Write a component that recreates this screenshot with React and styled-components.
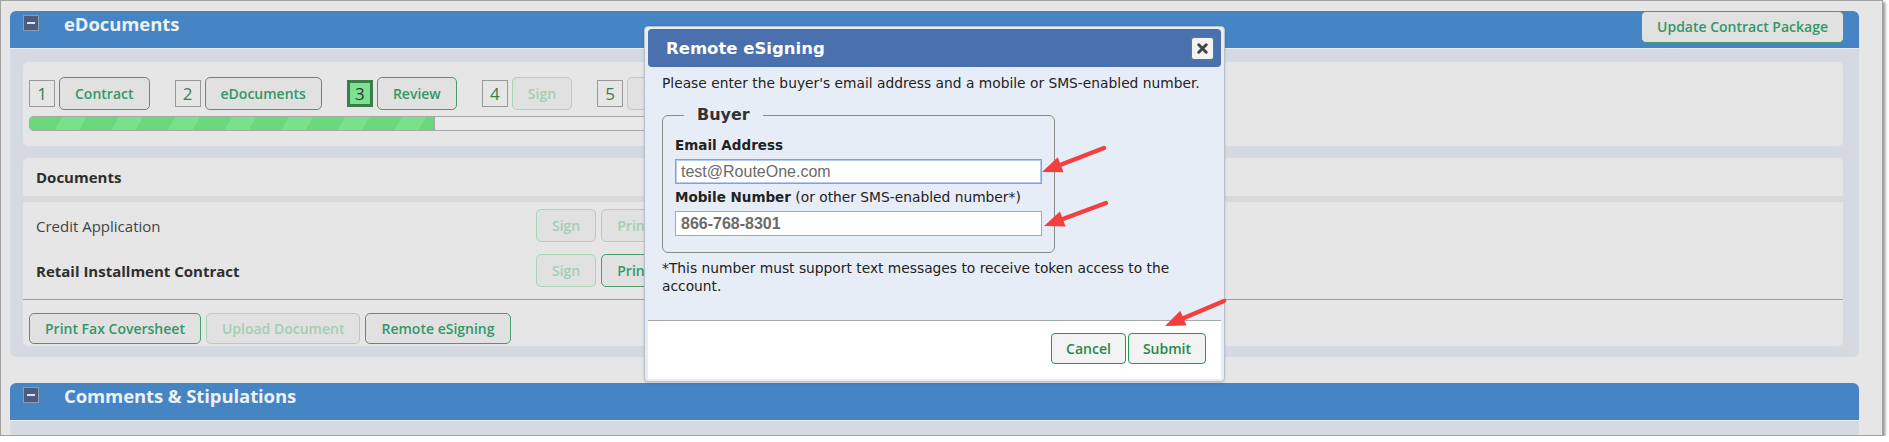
import React from "react";
import styled, { createGlobalStyle } from "styled-components";

const GlobalStyle = createGlobalStyle`
  html, body {
    margin: 0;
    padding: 0;
    background: #fff;
  }
  body {
    font-family: "Open Sans", "Liberation Sans", sans-serif;
  }
`;

const steps = [
  { n: 1, label: "Contract" },
  { n: 2, label: "eDocuments" },
  { n: 3, label: "Review", current: true },
  { n: 4, label: "Sign", off: true },
  { n: 5, label: "Fund", off: true },
];

const documents = [
  { name: "Credit Application", bold: false, printOff: true },
  { name: "Retail Installment Contract", bold: true, printOff: false },
];

const arrows = [
  { x1: 1104, y1: 148, x2: 1042, y2: 172 },
  { x1: 1106, y1: 203, x2: 1044, y2: 226 },
  { x1: 1224, y1: 301, x2: 1165, y2: 326 },
];

const Frame = styled.div`
  position: relative;
  box-sizing: border-box;
  width: 1883px;
  height: 436px;
  border: 1px solid #a3a3a3;
  background: #e6e6e6;
  box-shadow: 2px 2px 3px rgba(0, 0, 0, 0.45);
  padding: 10px 23px 0 9px;
  overflow: hidden;
`;

const Section = styled.section`
  margin-bottom: 26px;
`;

const SectionHeader = styled.div`
  display: flex;
  align-items: flex-start;
  height: 37px;
  padding: 0 15px 0 13px;
  background: #4585c4;
  border-bottom: 1px solid #e6edf5;
  border-radius: 6px 6px 0 0;
`;

const CollapseBox = styled.span`
  box-sizing: border-box;
  width: 16px;
  height: 16px;
  margin-top: 4px;
  display: flex;
  align-items: center;
  justify-content: center;
  background: #4a5c7f;
  border: 1px solid #8f9aaa;

  &::after {
    content: "";
    width: 8px;
    height: 2px;
    background: #dfe5ee;
  }
`;

const SectionTitle = styled.h2`
  margin: 0 0 0 25px;
  font: 700 18.5px/26px "Open Sans", sans-serif;
  color: #edf1f6;
  letter-spacing: -0.1px;
`;

const HeaderAction = styled.div`
  margin-left: auto;
`;

const SectionBody = styled.div`
  display: flex;
  flex-direction: column;
  gap: 12px;
  min-height: ${(p) => p.$min || 0}px;
  padding: 13px 16px 11px 13px;
  background: #d5d9e1;
  border-radius: 0 0 6px 6px;
`;

const Panel = styled.div`
  background: #e6e6e6;
  border-radius: 5px;
`;

const StepsPanel = styled(Panel)`
  padding: 15px 6px;
`;

const StepRow = styled.div`
  display: flex;
  align-items: center;
  height: 33px;
`;

const Step = styled.div`
  display: flex;
  align-items: center;
  gap: 4px;
  margin-right: 25px;
`;

const StepNum = styled.span`
  box-sizing: border-box;
  width: 26px;
  height: 27px;
  display: flex;
  align-items: center;
  justify-content: center;
  font: 400 17px/1 "Open Sans", sans-serif;
  color: ${(p) => (p.$current ? "#333" : "#3e7c50")};
  background: ${(p) => (p.$current ? "#7ee18f" : "transparent")};
  border: ${(p) => (p.$current ? "3px solid #3a7c4a" : "1px solid #999")};
`;

const GreenButton = styled.button`
  box-sizing: border-box;
  height: ${(p) => p.$h || 33}px;
  padding: 0 15px;
  border: 1px solid ${(p) => (p.$off ? "#a9d4ba" : "#4a9b6b")};
  border-radius: 5px;
  background: #e1e1e1;
  color: ${(p) => (p.$off ? "#a2cfb2" : "#33976a")};
  font: 600 14px/1 "Open Sans", sans-serif;
  white-space: nowrap;
  cursor: pointer;
`;

const ProgressTrack = styled.div`
  box-sizing: border-box;
  width: 1000px;
  height: 15px;
  margin-top: 6px;
  background: #e9e9e9;
  border: 1px solid #a8a8a8;
  border-radius: 4px;
  overflow: hidden;
`;

const ProgressFill = styled.div`
  height: 100%;
  border-right: 2px solid #a8a8a8;
  background: repeating-linear-gradient(
    120deg,
    #6ad97c 0 28px,
    #78e189 28px 49px
  );
`;

const DocHeader = styled.div`
  height: 38px;
  display: flex;
  align-items: center;
  padding: 0 13px;
  font: 700 15px "Open Sans", sans-serif;
  color: #2e2e2e;
  border-bottom: 6px solid #d9d9d9;
`;

const DocRows = styled.div`
  padding: 1px 0 6px;
  border-bottom: 1px solid #9d9d9d;
`;

const DocRow = styled.div`
  display: grid;
  grid-template-columns: 513px auto;
  align-items: center;
  height: 45px;
`;

const DocName = styled.span`
  padding-left: 13px;
  font: ${(p) => (p.$bold ? 700 : 400)} 15px "Open Sans", sans-serif;
  color: ${(p) => (p.$bold ? "#2e2e2e" : "#444")};
`;

const Actions = styled.div`
  display: flex;
  gap: ${(p) => p.$gap ?? 5}px;
`;

const DocFooter = styled(Actions)`
  padding: 13px 6px 2px;
`;

const Modal = styled.div`
  position: absolute;
  left: 643px;
  top: 25px;
  box-sizing: border-box;
  width: 581px;
  display: flex;
  flex-direction: column;
  padding: 2px 3px;
  background: #e7edf6;
  border: 1px solid #b7c0cb;
  border-radius: 4px;
  box-shadow: 0 1px 3px rgba(0, 0, 0, 0.15);
  font-family: "DejaVu Sans", Verdana, sans-serif;
`;

const TitleBar = styled.div`
  height: 38px;
  display: flex;
  align-items: center;
  justify-content: space-between;
  padding: 0 7px 0 18px;
  background: #4b70ae;
  border-radius: 4px;
`;

const ModalTitle = styled.h3`
  margin: 0;
  font: 700 16.5px "DejaVu Sans", Verdana, sans-serif;
  color: #fff;
`;

const CloseButton = styled.button`
  box-sizing: border-box;
  width: 23px;
  height: 23px;
  padding: 0;
  display: flex;
  align-items: center;
  justify-content: center;
  background: #f3f3f3;
  border: 1px solid #22a04e;
  border-radius: 3px;
  cursor: pointer;
`;

const ModalBody = styled.div`
  padding: 8px 14px 25px;
  font-size: 13.8px;
  line-height: 17px;
  color: #222;
`;

const Intro = styled.p`
  margin: 0;
`;

const Fieldset = styled.fieldset`
  box-sizing: border-box;
  width: 393px;
  margin: 13px 0 0;
  padding: 11px 12px 16px;
  border: 1px solid #8a8a8a;
  border-radius: 6px;
`;

const Legend = styled.legend`
  margin-left: 9px;
  padding: 0 13px;
  font: 700 16px/20px "DejaVu Sans", Verdana, sans-serif;
  color: #333;
`;

const FieldLabel = styled.label`
  display: block;
  margin-top: ${(p) => p.$top || 0}px;
  font-size: 13.8px;
  line-height: 18px;
  color: #222;

  b {
    font-weight: 700;
    font-size: 13.5px;
  }
`;

const TextInput = styled.input`
  box-sizing: border-box;
  display: block;
  width: 367px;
  height: 25px;
  margin-top: 5px;
  padding: 0 5px;
  background: #fff;
  border: 1px solid ${(p) => (p.$focus ? "#78a2ea" : "#a9a9a9")};
  box-shadow: ${(p) => (p.$focus ? "inset 0 0 0 1px #b4cbf3" : "none")};
  font: ${(p) => (p.$bold ? 700 : 400)} 16px "Liberation Sans", Arial, sans-serif;
  color: #6b6b6b;
  outline: none;
`;

const Note = styled.p`
  margin: 6px 0 0;
  line-height: 18px;
`;

const ModalFooter = styled.div`
  display: flex;
  justify-content: flex-end;
  gap: 2px;
  padding: 12px 15px 15px;
  background: #fff;
  border-top: 1px solid #a9a9a9;
`;

const DialogButton = styled.button`
  box-sizing: border-box;
  height: 31px;
  padding: 0 14px;
  background: #f3f3f3;
  border: 1px solid #1f9a4f;
  border-radius: 4px;
  font: 600 14px/1 "Open Sans", sans-serif;
  color: #1f8a4a;
  cursor: pointer;
`;

const Overlay = styled.svg`
  position: absolute;
  left: -1px;
  top: -1px;
  pointer-events: none;
`;

function Arrow({ x1, y1, x2, y2 }) {
  const dx = x2 - x1;
  const dy = y2 - y1;
  const len = Math.hypot(dx, dy);
  const ux = dx / len;
  const uy = dy / len;
  const head = 20;
  const half = 8;
  const bx = x2 - ux * head;
  const by = y2 - uy * head;
  const pts = [
    [x2, y2],
    [bx - uy * half, by + ux * half],
    [bx + uy * half, by - ux * half],
  ]
    .map((p) => p.join(","))
    .join(" ");
  return (
    <g>
      <line
        x1={x1}
        y1={y1}
        x2={bx + ux * 2}
        y2={by + uy * 2}
        stroke="#f23f3f"
        strokeWidth="4.5"
        strokeLinecap="round"
      />
      <polygon points={pts} fill="#f23f3f" />
    </g>
  );
}

const SectionHead = ({ title, children }) => (
  <SectionHeader>
    <CollapseBox />
    <SectionTitle>{title}</SectionTitle>
    {children && <HeaderAction>{children}</HeaderAction>}
  </SectionHeader>
);

export default function App() {
  return (
    <>
      <GlobalStyle />
      <Frame>
        <Section>
          <SectionHead title="eDocuments">
            <GreenButton $h={32}>Update Contract Package</GreenButton>
          </SectionHead>
          <SectionBody>
            <StepsPanel>
              <StepRow>
                {steps.map((s) => (
                  <Step key={s.n}>
                    <StepNum $current={s.current}>{s.n}</StepNum>
                    <GreenButton $off={s.off}>{s.label}</GreenButton>
                  </Step>
                ))}
              </StepRow>
              <ProgressTrack>
                <ProgressFill style={{ width: 403 }} />
              </ProgressTrack>
            </StepsPanel>

            <Panel>
              <DocHeader>Documents</DocHeader>
              <DocRows>
                {documents.map((d) => (
                  <DocRow key={d.name}>
                    <DocName $bold={d.bold}>{d.name}</DocName>
                    <Actions>
                      <GreenButton $off>Sign</GreenButton>
                      <GreenButton $off={d.printOff}>Print</GreenButton>
                    </Actions>
                  </DocRow>
                ))}
              </DocRows>
              <DocFooter>
                <GreenButton $h={31}>Print Fax Coversheet</GreenButton>
                <GreenButton $h={31} $off>
                  Upload Document
                </GreenButton>
                <GreenButton $h={31}>Remote eSigning</GreenButton>
              </DocFooter>
            </Panel>
          </SectionBody>
        </Section>

        <Section>
          <SectionHead title="Comments & Stipulations" />
          <SectionBody $min={60} />
        </Section>

        <Modal>
          <TitleBar>
            <ModalTitle>Remote eSigning</ModalTitle>
            <CloseButton aria-label="Close">
              <svg width="11" height="11" viewBox="0 0 11 11">
                <path
                  d="M1.8 1.8 L9.2 9.2 M9.2 1.8 L1.8 9.2"
                  stroke="#444"
                  strokeWidth="3"
                  strokeLinecap="round"
                />
              </svg>
            </CloseButton>
          </TitleBar>
          <ModalBody>
            <Intro>
              Please enter the buyer's email address and a mobile or SMS-enabled
              number.
            </Intro>
            <Fieldset>
              <Legend>Buyer</Legend>
              <FieldLabel>
                <b>Email Address</b>
              </FieldLabel>
              <TextInput $focus defaultValue="test@RouteOne.com" />
              <FieldLabel $top={4}>
                <b>Mobile Number</b> (or other SMS-enabled number*)
              </FieldLabel>
              <TextInput $bold defaultValue="866-768-8301" />
            </Fieldset>
            <Note>
              *This number must support text messages to receive token access to
              the account.
            </Note>
          </ModalBody>
          <ModalFooter>
            <DialogButton>Cancel</DialogButton>
            <DialogButton>Submit</DialogButton>
          </ModalFooter>
        </Modal>

        <Overlay width="1883" height="436">
          {arrows.map((a, i) => (
            <Arrow key={i} {...a} />
          ))}
        </Overlay>
      </Frame>
    </>
  );
}
